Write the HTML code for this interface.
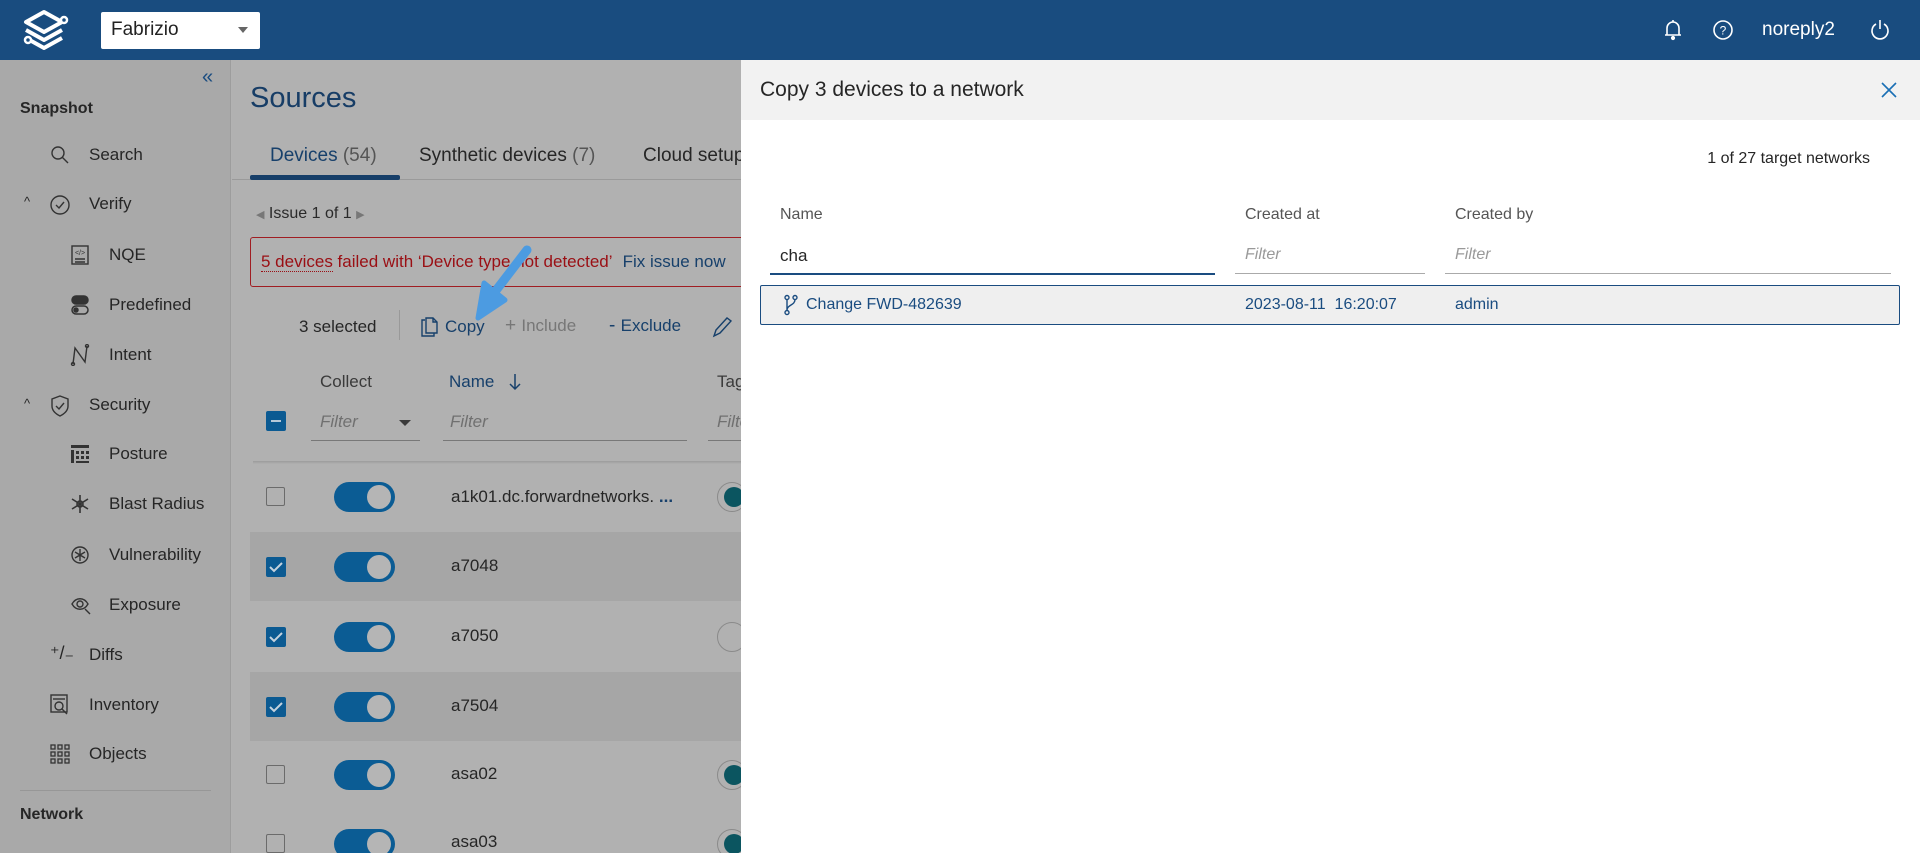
<!DOCTYPE html>
<html style="overflow:hidden;width:1920px;height:853px"><head><meta charset="utf-8"><style>
*{box-sizing:border-box;margin:0;padding:0}
body{width:1920px;height:853px;overflow:hidden;font-family:"Liberation Sans",sans-serif;background:#b2b2b2;position:relative;color:#2a2a2a}
.abs{position:absolute;white-space:nowrap}
.hdr{position:absolute;left:0;top:0;width:1920px;height:60px;background:#194c7f}
.side{position:absolute;left:0;top:60px;width:231px;height:793px;background:#a9a9a9;border-right:1px solid #9d9d9d}
.si{position:absolute;font-size:17px;color:#262626}
.main{position:absolute;left:232px;top:60px;width:509px;height:793px;background:#b1b1b1}
.panel{position:absolute;left:741px;top:60px;width:1179px;height:793px;background:#fff}
.row{position:absolute;left:250px;width:491px;height:69px}
.cb{position:absolute;left:266px;width:19px;height:19px;border:1.5px solid #6b6b6b;border-radius:2px;background:#b1b1b1}
.cbc{position:absolute;left:266px;width:20px;height:20px;background:#0b5a92;border-radius:2px}
.tg{position:absolute;left:334px;width:61px;height:30px;background:#0b5c94;border-radius:15px}
.tg:after{content:"";position:absolute;right:4px;top:3px;width:24px;height:24px;border-radius:50%;background:#b5b5b5}
.rn{position:absolute;left:451px;font-size:17px;color:#262626}
.tc{position:absolute;left:717px;width:30px;height:30px;border-radius:50%;border:1.5px solid #8a8a8a}
.tc i{position:absolute;left:6px;top:4px;width:20px;height:20px;border-radius:50%;background:#0b5560}
</style></head><body>
<div class="hdr"></div>
<svg class="abs" style="left:18px;top:8px" width="56" height="44" viewBox="0 0 56 44" fill="none" stroke="#fff" stroke-width="4" stroke-linejoin="round">
<path d="M26 4 L44 14 L26 24 L8 14 Z"/><path d="M8 22 L26 32 L44 22"/><path d="M8 30 L26 40 L44 30"/>
<circle cx="46" cy="12" r="3" fill="#194c7f" stroke-width="2.5"/><circle cx="10" cy="32" r="3" fill="#194c7f" stroke-width="2.5"/></svg>
<div class="abs" style="left:101px;top:12px;width:159px;height:37px;background:#fff;border-radius:2px"></div>
<div class="abs" style="left:111px;top:19px;font-size:19px;color:#222">Fabrizio</div>
<div class="abs" style="left:238px;top:27px;width:0;height:0;border-left:5px solid transparent;border-right:5px solid transparent;border-top:6px solid #666"></div>
<svg class="abs" style="left:1663px;top:18px" width="20" height="24" viewBox="0 0 20 24" fill="none" stroke="#fff" stroke-width="1.6"><path d="M4 17 V10 A6 6 0 0 1 16 10 V17 Z M2 17 H18"/><circle cx="10" cy="20" r="1.3" fill="#fff"/><path d="M10 2v2"/></svg>
<svg class="abs" style="left:1712px;top:19px" width="22" height="22" viewBox="0 0 22 22" fill="none" stroke="#fff" stroke-width="1.6"><circle cx="11" cy="11" r="9"/><text x="11" y="15.5" font-size="12" text-anchor="middle" fill="#fff" stroke="none" font-family="Liberation Sans">?</text></svg>
<div class="abs" style="left:1762px;top:19px;font-size:19px;color:#fff">noreply2</div>
<svg class="abs" style="left:1869px;top:18px" width="22" height="24" viewBox="0 0 22 24" fill="none" stroke="#fff" stroke-width="1.6"><path d="M7 6 A8 8 0 1 0 15 6"/><path d="M11 2v9"/></svg>

<div class="side"></div>
<div class="abs" style="left:202px;top:66px;font-size:20px;color:#1a4c80">«</div>
<div class="si" style="left:20px;top:100px;font-weight:bold;font-size:16px">Snapshot</div>
<svg class="abs" style="left:50px;top:145px" width="20" height="20" fill="none" stroke="#333" stroke-width="1.4"><circle cx="8" cy="8" r="6"/><path d="M12.5 12.5 L18 18"/></svg>
<div class="si" style="left:89px;top:145px">Search</div>
<div class="si" style="left:24px;top:194px;font-size:13px">^</div>
<svg class="abs" style="left:49px;top:194px" width="22" height="22" fill="none" stroke="#333" stroke-width="1.4"><circle cx="11" cy="11" r="9"/><path d="M7 11l3 3 5-6"/></svg>
<div class="si" style="left:89px;top:194px">Verify</div>
<svg class="abs" style="left:70px;top:244px" width="20" height="22" fill="none" stroke="#333" stroke-width="1.4"><rect x="2" y="2" width="16" height="18"/><path d="M5 15h10M5 18h10"/><text x="10" y="11" font-size="7" text-anchor="middle" fill="#333" stroke="none">&lt;/&gt;</text></svg>
<div class="si" style="left:109px;top:245px">NQE</div>
<svg class="abs" style="left:70px;top:294px" width="20" height="22" fill="none" stroke="#333" stroke-width="1.5"><rect x="2" y="2" width="16" height="8" rx="4" fill="#333"/><rect x="2" y="12" width="16" height="8" rx="4"/><circle cx="6" cy="16" r="2" fill="#333"/></svg>
<div class="si" style="left:109px;top:295px">Predefined</div>
<svg class="abs" style="left:70px;top:344px" width="20" height="22" fill="none" stroke="#333" stroke-width="1.4"><path d="M3 20 L5 4 L15 18 L17 2"/><circle cx="3" cy="20" r="1.5"/><circle cx="17" cy="2" r="1.5"/></svg>
<div class="si" style="left:109px;top:345px">Intent</div>
<div class="si" style="left:24px;top:396px;font-size:13px">^</div>
<svg class="abs" style="left:49px;top:394px" width="22" height="24" fill="none" stroke="#333" stroke-width="1.4"><path d="M11 2 L19 5 V12 C19 17 15 20 11 22 C7 20 3 17 3 12 V5 Z"/><path d="M7 12l3 3 5-6"/></svg>
<div class="si" style="left:89px;top:395px">Security</div>
<svg class="abs" style="left:70px;top:444px" width="20" height="20" fill="#333"><rect x="1" y="1" width="18" height="3"/><rect x="1" y="6" width="3" height="13"/><rect x="6" y="7" width="3" height="3"/><rect x="11" y="7" width="3" height="3"/><rect x="16" y="7" width="3" height="3"/><rect x="6" y="12" width="3" height="3"/><rect x="11" y="12" width="3" height="3"/><rect x="16" y="12" width="3" height="3"/><rect x="6" y="17" width="13" height="2"/></svg>
<div class="si" style="left:109px;top:444px">Posture</div>
<svg class="abs" style="left:70px;top:494px" width="20" height="20" fill="none" stroke="#333" stroke-width="1.6"><path d="M10 1v18M2 5l16 10M2 15l16-10"/><circle cx="10" cy="10" r="3"/></svg>
<div class="si" style="left:109px;top:494px">Blast Radius</div>
<svg class="abs" style="left:70px;top:544px" width="20" height="22" fill="none" stroke="#333" stroke-width="1.4"><circle cx="10" cy="11" r="8"/><path d="M10 5v12M5 8l10 6M5 14l10-6"/></svg>
<div class="si" style="left:109px;top:545px">Vulnerability</div>
<svg class="abs" style="left:70px;top:594px" width="22" height="22" fill="none" stroke="#333" stroke-width="1.4"><path d="M2 10 C6 3 14 3 18 10 C14 17 6 17 2 10Z"/><circle cx="10" cy="10" r="3"/><path d="M15 15l5 5"/></svg>
<div class="si" style="left:109px;top:595px">Exposure</div>
<div class="si" style="left:50px;top:643px;font-size:18px">⁺/₋</div>
<div class="si" style="left:89px;top:645px">Diffs</div>
<svg class="abs" style="left:49px;top:693px" width="22" height="22" fill="none" stroke="#333" stroke-width="1.4"><rect x="2" y="2" width="16" height="17"/><path d="M4 6h12"/><circle cx="10" cy="13" r="4"/><path d="M13 16l5 5"/></svg>
<div class="si" style="left:89px;top:695px">Inventory</div>
<svg class="abs" style="left:50px;top:744px" width="20" height="20" fill="none" stroke="#333" stroke-width="1.3"><rect x="1" y="1" width="4" height="4"/><rect x="8" y="1" width="4" height="4"/><rect x="15" y="1" width="4" height="4"/><rect x="1" y="8" width="4" height="4"/><rect x="8" y="8" width="4" height="4"/><rect x="15" y="8" width="4" height="4"/><rect x="1" y="15" width="4" height="4"/><rect x="8" y="15" width="4" height="4"/><rect x="15" y="15" width="4" height="4"/></svg>
<div class="si" style="left:89px;top:744px">Objects</div>
<div class="abs" style="left:20px;top:790px;width:191px;height:1px;background:#979797"></div>
<div class="si" style="left:20px;top:806px;font-weight:bold;font-size:16px">Network</div>

<div class="main"></div>
<div class="abs" style="left:250px;top:82px;font-size:29px;color:#173d66;font-weight:500">Sources</div>
<div class="abs" style="left:232px;top:179px;width:509px;height:1px;background:#9a9a9a"></div>
<div class="abs" style="left:270px;top:145px;font-size:19px;color:#17406b">Devices <span style="color:#555">(54)</span></div>
<div class="abs" style="left:419px;top:145px;font-size:19px;color:#262626">Synthetic devices <span style="color:#555">(7)</span></div>
<div class="abs" style="left:643px;top:145px;font-size:19px;color:#262626">Cloud setup</div>
<div class="abs" style="left:250px;top:175px;width:150px;height:5px;background:#173f69;border-radius:2px"></div>
<div class="abs" style="left:256px;top:205px;font-size:16px;color:#2a2a2a"><span style="color:#777;font-size:11px">◀</span> Issue 1 of 1 <span style="color:#777;font-size:11px">▶</span></div>
<div class="abs" style="left:250px;top:237px;width:500px;height:50px;border:1.5px solid #a01d22;border-radius:3px"></div>
<div class="abs" style="left:261px;top:252px;font-size:17px;color:#9a0f14"><span style="border-bottom:1px dotted #9a0f14">5 devices</span> failed with ‘Device type not detected’ <span style="color:#17406b;margin-left:6px">Fix issue now</span></div>
<div class="abs" style="left:299px;top:317px;font-size:17px;color:#262626">3 selected</div>
<div class="abs" style="left:399px;top:310px;width:1px;height:30px;background:#999"></div>
<svg class="abs" style="left:420px;top:316px" width="18" height="22" fill="none" stroke="#17406b" stroke-width="1.4"><path d="M5 4h-3v16h12v-3"/><path d="M6 2h7l4 4v11H6Z"/><path d="M13 2v4h4"/></svg>
<div class="abs" style="left:445px;top:317px;font-size:17px;color:#17406b">Copy</div>
<div class="abs" style="left:505px;top:315px;font-size:19px;color:#777">+ <span style="font-size:17px">Include</span></div>
<div class="abs" style="left:609px;top:315px;font-size:19px;color:#17406b">- <span style="font-size:17px">Exclude</span></div>
<svg class="abs" style="left:711px;top:315px" width="22" height="24" fill="none" stroke="#17406b" stroke-width="1.4"><path d="M3 21l2-6L16 3l4 3L9 18Z"/></svg>
<div class="abs" style="left:320px;top:372px;font-size:17px;color:#3a3a3a">Collect</div>
<div class="abs" style="left:449px;top:372px;font-size:17px;color:#17406b">Name</div>
<svg class="abs" style="left:508px;top:372px" width="14" height="20" fill="none" stroke="#17406b" stroke-width="1.5"><path d="M7 2v15M2 12l5 5 5-5"/></svg>
<div class="abs" style="left:717px;top:372px;font-size:17px;color:#3a3a3a">Tags</div>
<div class="cbc" style="top:411px"><div style="position:absolute;left:5px;top:9px;width:10px;height:2px;background:#b5c8d8"></div></div>
<div class="abs" style="left:320px;top:412px;font-size:17px;font-style:italic;color:#707070">Filter</div>
<div class="abs" style="left:399px;top:420px;border-left:6px solid transparent;border-right:6px solid transparent;border-top:6px solid #3a3a3a"></div>
<div class="abs" style="left:311px;top:440px;width:109px;height:1px;background:#787878"></div>
<div class="abs" style="left:450px;top:412px;font-size:17px;font-style:italic;color:#707070">Filter</div>
<div class="abs" style="left:443px;top:440px;width:244px;height:1px;background:#787878"></div>
<div class="abs" style="left:717px;top:412px;font-size:17px;font-style:italic;color:#707070">Filter</div>
<div class="abs" style="left:708px;top:440px;width:40px;height:1px;background:#787878"></div>
<div class="abs" style="left:253px;top:461px;width:488px;height:3px;background:linear-gradient(#9c9c9c,#b1b1b1)"></div>

<div class="row" style="top:532px;background:#a6a6a6"></div>
<div class="row" style="top:672px;background:#a6a6a6"></div>
<div class="cb" style="top:487px"></div><div class="tg" style="top:482px"></div><div class="rn" style="top:487px">a1k01.dc.forwardnetworks.<span style="color:#17406b;font-weight:bold"> ...</span></div><div class="tc" style="top:482px"><i></i></div>
<div class="cbc" style="top:557px"><svg width="20" height="20" fill="none" stroke="#c4d2dd" stroke-width="2"><path d="M4 10l4 4 8-8"/></svg></div><div class="tg" style="top:552px"></div><div class="rn" style="top:556px">a7048</div>
<div class="cbc" style="top:627px"><svg width="20" height="20" fill="none" stroke="#c4d2dd" stroke-width="2"><path d="M4 10l4 4 8-8"/></svg></div><div class="tg" style="top:622px"></div><div class="rn" style="top:626px">a7050</div><div class="tc" style="top:622px"></div>
<div class="cbc" style="top:697px"><svg width="20" height="20" fill="none" stroke="#c4d2dd" stroke-width="2"><path d="M4 10l4 4 8-8"/></svg></div><div class="tg" style="top:692px"></div><div class="rn" style="top:696px">a7504</div>
<div class="cb" style="top:765px"></div><div class="tg" style="top:760px"></div><div class="rn" style="top:764px">asa02</div><div class="tc" style="top:760px"><i></i></div>
<div class="cb" style="top:834px"></div><div class="tg" style="top:829px"></div><div class="rn" style="top:832px">asa03</div><div class="tc" style="top:829px"><i></i></div>
<svg class="abs" style="left:470px;top:240px" width="70" height="85">
<path d="M57 10 L24 53" stroke="#4c9be1" stroke-width="9" stroke-linecap="round"/>
<path d="M8 78 L14 43 L35 60 Z" fill="#4c9be1" stroke="#4c9be1" stroke-width="5" stroke-linejoin="round"/>
</svg>

<div class="panel"></div>
<div class="abs" style="left:741px;top:60px;width:1179px;height:60px;background:#f2f2f2"></div>
<div class="abs" style="left:760px;top:78px;font-size:21px;color:#262626">Copy 3 devices to a network</div>
<svg class="abs" style="left:1880px;top:81px" width="18" height="18" fill="none" stroke="#1a6fb5" stroke-width="1.6"><path d="M2 2l14 14M16 2L2 16"/></svg>
<div class="abs" style="right:50px;top:150px;font-size:16px;color:#262626">1 of 27 target networks</div>
<div class="abs" style="left:780px;top:206px;font-size:16px;color:#555">Name</div>
<div class="abs" style="left:1245px;top:206px;font-size:16px;color:#555">Created at</div>
<div class="abs" style="left:1455px;top:206px;font-size:16px;color:#555">Created by</div>
<div class="abs" style="left:780px;top:246px;font-size:17px;color:#262626">cha</div>
<div class="abs" style="left:770px;top:273px;width:445px;height:2px;background:#1a4c80"></div>
<div class="abs" style="left:1245px;top:246px;font-size:16px;font-style:italic;color:#999">Filter</div>
<div class="abs" style="left:1235px;top:273px;width:190px;height:1px;background:#aaa"></div>
<div class="abs" style="left:1455px;top:246px;font-size:16px;font-style:italic;color:#999">Filter</div>
<div class="abs" style="left:1445px;top:273px;width:446px;height:1px;background:#aaa"></div>
<div class="abs" style="left:760px;top:285px;width:1140px;height:40px;background:#efefef;border:1.5px solid #1a4c80;border-radius:2px"></div>
<svg class="abs" style="left:783px;top:294px" width="16" height="22" fill="none" stroke="#1a4c80" stroke-width="1.4"><circle cx="4" cy="3.5" r="2"/><circle cx="12" cy="3.5" r="2"/><circle cx="4" cy="18.5" r="2"/><path d="M4 5.5v11M12 5.5c0 6-8 5-8 11"/></svg>
<div class="abs" style="left:806px;top:296px;font-size:16px;color:#1a4c80">Change FWD-482639</div>
<div class="abs" style="left:1245px;top:296px;font-size:16px;color:#1a4c80">2023-08-11&nbsp;&nbsp;16:20:07</div>
<div class="abs" style="left:1455px;top:296px;font-size:16px;color:#1a4c80">admin</div>
</body></html>
